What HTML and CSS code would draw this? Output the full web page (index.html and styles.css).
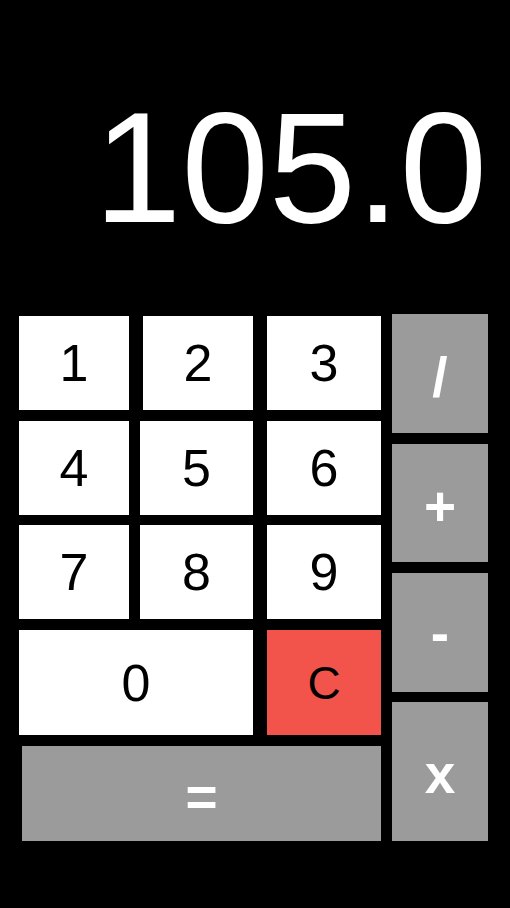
FILE: index.html
```html
<!DOCTYPE html>
<html>
<head>
<meta charset="utf-8">
<link rel="stylesheet" href="styles.css">
</head>
<body>
<div class="app">
  <div class="display"><span class="value">105.0</span></div>
  <div class="pad">
    <div class="keys">
      <div class="row r1">
        <div class="key digit w110">1</div>
        <div class="key digit w110 g14">2</div>
        <div class="key digit w114 g14">3</div>
      </div>
      <div class="row r2">
        <div class="key digit w110">4</div>
        <div class="key digit w113 g11">5</div>
        <div class="key digit w114 g14">6</div>
      </div>
      <div class="row r3">
        <div class="key digit w110">7</div>
        <div class="key digit w113 g11">8</div>
        <div class="key digit w114 g14">9</div>
      </div>
      <div class="row r4">
        <div class="key digit w234">0</div>
        <div class="key clear w114 g14">C</div>
      </div>
      <div class="row r5">
        <div class="key op equals">=</div>
      </div>
    </div>
    <div class="ops">
      <div class="key op o1">/</div>
      <div class="key op o2">+</div>
      <div class="key op o3">-</div>
      <div class="key op o4">x</div>
    </div>
  </div>
</div>
</body>
</html>
```

FILE: styles.css
```css
html, body {
  margin: 0;
  padding: 0;
  background: #000;
}
body {
  width: 510px;
  height: 908px;
  overflow: hidden;
  font-family: "Liberation Sans", Arial, sans-serif;
}
.app {
  display: flex;
  flex-direction: column;
}
.display {
  height: 314px;
  box-sizing: border-box;
  padding-top: 89px;
  padding-right: 23px;
  display: flex;
  justify-content: flex-end;
  align-items: flex-start;
}
.value {
  color: #fff;
  font-size: 157px;
  line-height: 1;
}
.pad {
  display: flex;
  align-items: flex-start;
}
.keys {
  margin-left: 19px;
  margin-top: 2px;
  width: 362px;
  display: flex;
  flex-direction: column;
}
.row {
  display: flex;
  height: 94px;
}
.r2 { margin-top: 11px; }
.r3 { margin-top: 10px; }
.r4 { margin-top: 11px; height: 105px; }
.r5 { margin-top: 11px; height: 95px; }
.key {
  display: flex;
  align-items: center;
  justify-content: center;
  box-sizing: border-box;
}
.digit {
  background: #fff;
  color: #000;
  font-size: 52px;
}
.clear {
  background: #f2544c;
  color: #000;
  font-size: 46px;
}
.op {
  background: #9b9b9b;
  color: #fff;
  font-size: 55px;
  font-weight: bold;
}
.w110 { width: 110px; }
.w113 { width: 113px; }
.w114 { width: 114px; }
.w234 { width: 234px; }
.g14 { margin-left: 14px; }
.g11 { margin-left: 11px; }
.equals {
  margin-left: 3px;
  width: 359px;
  height: 95px;
  padding-top: 6px;
}
.ops {
  margin-left: 11px;
  width: 96px;
  display: flex;
  flex-direction: column;
}
.o1 { height: 119px; padding-top: 6px; }
.o2 { height: 118px; margin-top: 11px; padding-top: 5px; }
.o3 { height: 119px; margin-top: 11px; }
.o4 { height: 139px; margin-top: 10px; padding-top: 5px; }
```
